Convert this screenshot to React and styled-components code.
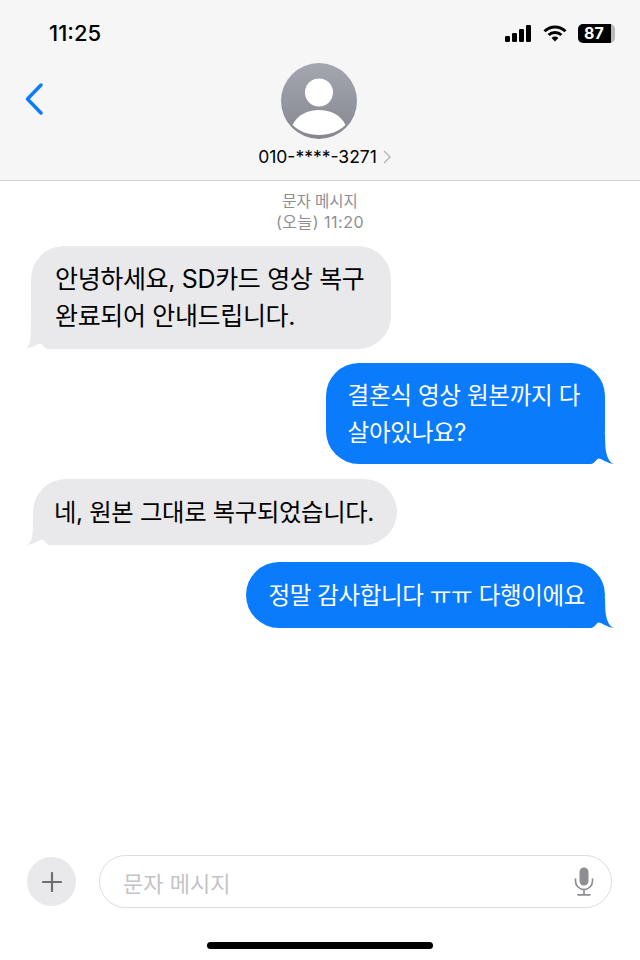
import React from "react";
import styled, { createGlobalStyle } from "styled-components";

const KR = `Inter, "Noto Sans CJK KR", sans-serif`;

const Global = createGlobalStyle`
  html, body { margin: 0; padding: 0; background: #fff; }
  * { box-sizing: border-box; }
`;

const Screen = styled.div`
  width: 640px;
  height: 960px;
  display: flex;
  flex-direction: column;
  background: #fff;
  font-family: ${KR};
  color: #000;
  overflow: hidden;
`;

const Header = styled.header`
  height: 181px;
  flex: none;
  background: #f6f6f6;
  border-bottom: 1px solid #cfcfcf;
  display: flex;
  flex-direction: column;
`;

const StatusBar = styled.div`
  height: 63px;
  flex: none;
  padding: 20px 25px 0 49px;
  display: flex;
  justify-content: space-between;
  align-items: flex-start;
`;

const Clock = styled.span`
  font-size: 22px;
  line-height: 26px;
  font-weight: 500;
`;

const StatusIcons = styled.div`
  display: flex;
  align-items: center;
  gap: 11px;
  height: 26px;
`;

const Battery = styled.div`
  width: 37px;
  height: 19px;
  background: linear-gradient(90deg, #000 0 88%, #b9b9b9 88% 100%);
  border-radius: 5px;
  color: #fff;
  font-size: 16px;
  font-weight: 700;
  line-height: 19px;
  padding-left: 6px;
`;

const Nav = styled.div`
  flex: 1;
  display: grid;
  grid-template-columns: 1fr auto 1fr;
  align-items: start;
`;

const Back = styled.div`
  padding: 20px 0 0 25px;
  display: flex;
`;

const Contact = styled.div`
  display: flex;
  flex-direction: column;
  align-items: center;
`;

const Avatar = styled.svg`
  width: 76px;
  height: 76px;
  display: block;
  margin-right: 1px;
`;

const NameRow = styled.div`
  margin-top: 7px;
  margin-right: 5px;
  display: flex;
  align-items: center;
  font-size: 17.5px;
  line-height: 22px;
`;

const NameChevron = styled.svg`
  width: 8px;
  height: 14px;
  margin-left: 6px;
  margin-right: -14px;
`;

const Thread = styled.main`
  flex: 1;
  display: flex;
  flex-direction: column;
  padding: 0 35px 0 31px;
`;

const Stamp = styled.div`
  margin-top: 10px;
  margin-bottom: 13px;
  padding-left: 4px;
  text-align: center;
  color: #8e8e93;
  font-size: 15.5px;
  line-height: 21px;
`;

const StampTime = styled.div`
  font-size: 16px;
  letter-spacing: 0.5px;
`;

const Bubble = styled.div`
  position: relative;
  width: fit-content;
  white-space: nowrap;
  padding: ${(p) => p.$pad};
  margin-top: ${(p) => p.$gap}px;
  margin-left: ${(p) => p.$shift || 0}px;
  border-radius: 33px;
  font-size: ${(p) => p.$size}px;
  line-height: 37px;
  letter-spacing: -0.35px;
  background: ${(p) => (p.$me ? "#0a7bfb" : "#e9e9eb")};
  color: ${(p) => (p.$me ? "#fff" : "#000")};
  align-self: ${(p) => (p.$me ? "flex-end" : "flex-start")};
`;

const Tail = styled.svg`
  position: absolute;
  bottom: 0;
  width: 44px;
  height: 30px;
  ${(p) => (p.$me ? "right: -10px" : "left: -7px; transform: scaleX(-1)")};
  fill: ${(p) => (p.$me ? "#0a7bfb" : "#e9e9eb")};
`;

const Composer = styled.div`
  flex: none;
  display: flex;
  align-items: center;
  gap: 23px;
  padding: 0 28px 0 27px;
  height: 53px;
`;

const Plus = styled.div`
  width: 49px;
  height: 49px;
  flex: none;
  border-radius: 50%;
  background: #e9e9eb;
  display: flex;
  align-items: center;
  justify-content: center;
`;

const Field = styled.div`
  flex: 1;
  height: 53px;
  border: 1px solid #dcdcdc;
  border-radius: 27px;
  padding: 0 17px 0 23px;
  display: flex;
  align-items: center;
  justify-content: space-between;
  color: #c4c4c6;
  font-size: 22px;
`;

const HomeZone = styled.div`
  flex: none;
  height: 52px;
  display: flex;
  justify-content: center;
  padding-top: 34px;
`;

const HomeBar = styled.div`
  width: 226px;
  height: 7px;
  border-radius: 4px;
  background: #000;
`;

const TAIL_ME = "M0 30L20 30C23 30 25 25.500 27.500 24.500C31 24.500 35 29 43 30C38.500 28.500 35.500 23 34.500 14C34.200 9 34.200 4 34 0L26 0L26 14Z";
const TAIL_THEM = "M0 30L20 30C23 30 25 25.500 27.500 24.500C31 24.500 35 29 43 30C39 28.500 37.500 23 37.300 14C37.200 9 37.100 4 37 0L29 0L29 14Z";

function Message({ me, gap, pad, size, shift, children }) {
  return (
    <Bubble $me={me} $gap={gap} $pad={pad} $size={size} $shift={shift}>
      {children}
      <Tail $me={me} viewBox="0 0 44 30">
        <path d={me ? TAIL_ME : TAIL_THEM} />
      </Tail>
    </Bubble>
  );
}

export default function App() {
  return (
    <Screen>
      <Global />
      <Header>
        <StatusBar>
          <Clock>11:25</Clock>
          <StatusIcons>
            <svg width="27" height="17" viewBox="0 0 27 17">
              <rect x="0" y="11" width="5" height="6" rx="1.200" />
              <rect x="7" y="8" width="5" height="9" rx="1.200" />
              <rect x="14" y="4" width="5" height="13" rx="1.200" />
              <rect x="21" y="0" width="5" height="17" rx="1.200" />
            </svg>
            <svg width="24" height="17" viewBox="0 0 24 17" fill="none" stroke="#000" strokeWidth="3">
              <path d="M1.500 6.200a15 15 0 0 1 21 0" />
              <path d="M5.600 10a9.200 9.200 0 0 1 12.800 0" />
              <path d="M12 16.600l-3.400-3.600a4.800 4.800 0 0 1 6.800 0z" fill="#000" stroke="none" />
            </svg>
            <Battery>87</Battery>
          </StatusIcons>
        </StatusBar>
        <Nav>
          <Back>
            <svg width="18" height="32" viewBox="0 0 18 32" fill="none" stroke="#0a7bfb" strokeWidth="3.400" strokeLinecap="round" strokeLinejoin="round">
              <path d="M16 2L2.500 16 16 30" />
            </svg>
          </Back>
          <Contact>
            <Avatar viewBox="0 0 76 76">
              <defs>
                <linearGradient id="av" x1="0" y1="0" x2="0" y2="1">
                  <stop offset="0" stopColor="#a4a7b0" />
                  <stop offset="1" stopColor="#85878f" />
                </linearGradient>
              </defs>
              <circle cx="38" cy="38" r="38" fill="url(#av)" />
              <circle cx="38" cy="29.500" r="14" fill="#fff" />
              <path d="M11.500 62C16 52 27 47 38 47S60 52 64.500 62C58 68.500 48.500 72 38 72S18 68.500 11.500 62Z" fill="#fff" />
            </Avatar>
            <NameRow>
              010-****-3271
              <NameChevron viewBox="0 0 8 14" fill="none" stroke="#b4b4b8" strokeWidth="1.400">
                <path d="M1 1l6 6-6 6" />
              </NameChevron>
            </NameRow>
          </Contact>
          <div />
        </Nav>
      </Header>
      <Thread>
        <Stamp>문자 메시지<StampTime>(오늘) 11:20</StampTime></Stamp>
        <Message gap={0} size={25} pad="14.500px 27px 14.500px 24px">안녕하세요, SD카드 영상 복구<br />완료되어 안내드립니다.</Message>
        <Message gap={14} size={23.6} pad="13.500px 25px 13.500px 22px" me>결혼식 영상 원본까지 다<br />살아있나요?</Message>
        <Message gap={15} size={24.4} shift={2} pad="14.500px 23px 14.500px 21px">네, 원본 그대로 복구되었습니다.</Message>
        <Message gap={17} size={23.5} pad="14.500px 20px 14.500px 22px" me>정말 감사합니다 ㅠㅠ 다행이에요</Message>
      </Thread>
      <Composer>
        <Plus>
          <svg width="20" height="20" viewBox="0 0 20 20" stroke="#6f6f73" strokeWidth="2.200" strokeLinecap="round">
            <path d="M10 1v18M1 10h18" />
          </svg>
        </Plus>
        <Field>
          문자 메시지
          <svg width="20" height="29" viewBox="0 0 20 29" fill="none">
            <rect x="5.500" y="0.500" width="9" height="18" rx="4.500" fill="#8e8e93" />
            <path d="M1.500 12v2a8.500 8.500 0 0 0 17 0v-2M10 22.500v5M4 27.800h12" stroke="#8e8e93" strokeWidth="1.700" strokeLinecap="round" />
          </svg>
        </Field>
      </Composer>
      <HomeZone><HomeBar /></HomeZone>
    </Screen>
  );
}
